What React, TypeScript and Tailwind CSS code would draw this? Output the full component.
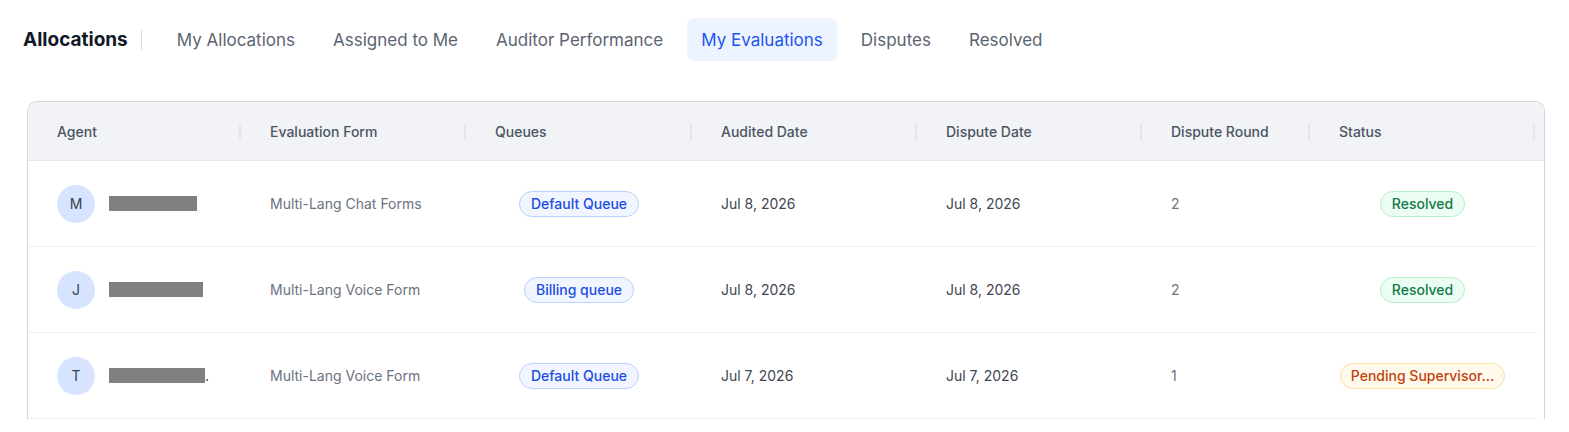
import React from "react";

const tabs = ["My Allocations", "Assigned to Me", "Auditor Performance", "My Evaluations", "Disputes", "Resolved"];

const columns = [
  { label: "Agent", w: "w-[213px]" },
  { label: "Evaluation Form", w: "w-[225px]" },
  { label: "Queues", w: "w-[226px]" },
  { label: "Audited Date", w: "w-[225px]" },
  { label: "Dispute Date", w: "w-[225px]" },
  { label: "Dispute Round", w: "w-[168px]" },
  { label: "Status", w: "w-[225px]" },
];

type Row = {
  initial: string;
  nameW: string;
  dot?: boolean;
  form: string;
  queue: string;
  audited: string;
  disputed: string;
  round: string;
  status: "resolved" | "pending";
};

const rows: Row[] = [
  { initial: "M", nameW: "w-[88px]", form: "Multi-Lang Chat Forms", queue: "Default Queue", audited: "Jul 8, 2026", disputed: "Jul 8, 2026", round: "2", status: "resolved" },
  { initial: "J", nameW: "w-[94px]", form: "Multi-Lang Voice Form", queue: "Billing queue", audited: "Jul 8, 2026", disputed: "Jul 8, 2026", round: "2", status: "resolved" },
  { initial: "T", nameW: "w-[96px]", dot: true, form: "Multi-Lang Voice Form", queue: "Default Queue", audited: "Jul 7, 2026", disputed: "Jul 7, 2026", round: "1", status: "pending" },
];

function StatusBadge({ status }: { status: Row["status"] }) {
  if (status === "resolved") {
    return (
      <span className="inline-flex h-[26px] items-center rounded-full border border-[#b7efcb] bg-[#ecfdf3] px-[11px] text-[14px] font-medium text-[#137a48]">
        Resolved
      </span>
    );
  }
  return (
    <span className="inline-flex h-[26px] items-center whitespace-nowrap rounded-full border border-[#fbe0a0] bg-[#fffaeb] px-[10px] text-[14px] font-medium text-[#c2410c]">
      Pending Supervisor…
    </span>
  );
}

export default function App() {
  return (
    <div className="min-h-screen bg-white font-['Inter','Liberation_Sans',sans-serif] antialiased">
      {/* Top nav */}
      <div className="flex items-center pl-[23px] pt-[18px]">
        <h1 className="pt-[2px] text-[19px] font-bold text-[#111827]">Allocations</h1>
        <div className="ml-[13px] h-[20px] w-px bg-[#d9dce1]" />
        <nav className="ml-[21px] flex items-center gap-[10px]">
          {tabs.map((t) => (
            <button
              key={t}
              className={
                t === "My Evaluations"
                  ? "flex h-[43px] items-center rounded-[7px] bg-[#eef4ff] px-[14px] pt-[2px] text-[17px] text-[#1a56f0]"
                  : "flex h-[43px] items-center rounded-[7px] px-[14px] pt-[2px] text-[17px] text-[#5b6472]"
              }
            >
              {t}
            </button>
          ))}
        </nav>
      </div>

      {/* Table card */}
      <div className="ml-[27px] mr-[24px] mt-[40px] overflow-hidden rounded-t-[10px] border border-b-0 border-[#d3d7de]">
        <div className="flex h-[59px] items-center border-b border-[#e3e6eb] bg-[#f1f3f7] pt-px">
          {columns.map((c) => (
            <div key={c.label} className={`${c.w} flex h-full shrink-0 items-center justify-between pl-[29px]`}>
              <span className="text-[14px] font-medium text-[#4b5563]">{c.label}</span>
              <span className="h-[16px] w-[2px] bg-[#e3e6eb]" />
            </div>
          ))}
        </div>

        {rows.map((r, i) => (
          <div key={i} className="flex h-[86px] w-[1509px] items-center border-b border-[#eceef1]">
            <div className="flex w-[213px] shrink-0 items-center pl-[29px]">
              <div className="flex h-[38px] w-[38px] items-center justify-center rounded-full bg-[#d6e4ff] text-[14px] text-[#374151]">
                {r.initial}
              </div>
              <div className={`ml-[14px] h-[15px] ${r.nameW} bg-[#808080]`} />
              {r.dot && <span className="text-[14px] leading-none text-[#111827]">.</span>}
            </div>
            <div className="w-[225px] shrink-0 pl-[29px] text-[14px] text-[#6b7280]">{r.form}</div>
            <div className="flex w-[226px] shrink-0 justify-center">
              <span className="inline-flex h-[26px] items-center rounded-full border border-[#bcd0fb] bg-[#f0f5ff] px-[11px] text-[14px] font-medium text-[#1d4ee0]">
                {r.queue}
              </span>
            </div>
            <div className="w-[225px] shrink-0 pl-[29px] text-[14px] text-[#3f4753]">{r.audited}</div>
            <div className="w-[225px] shrink-0 pl-[29px] text-[14px] text-[#3f4753]">{r.disputed}</div>
            <div className="w-[168px] shrink-0 pl-[29px] text-[14px] text-[#6b7280]">{r.round}</div>
            <div className="flex w-[225px] shrink-0 justify-center">
              <StatusBadge status={r.status} />
            </div>
          </div>
        ))}
      </div>
    </div>
  );
}
